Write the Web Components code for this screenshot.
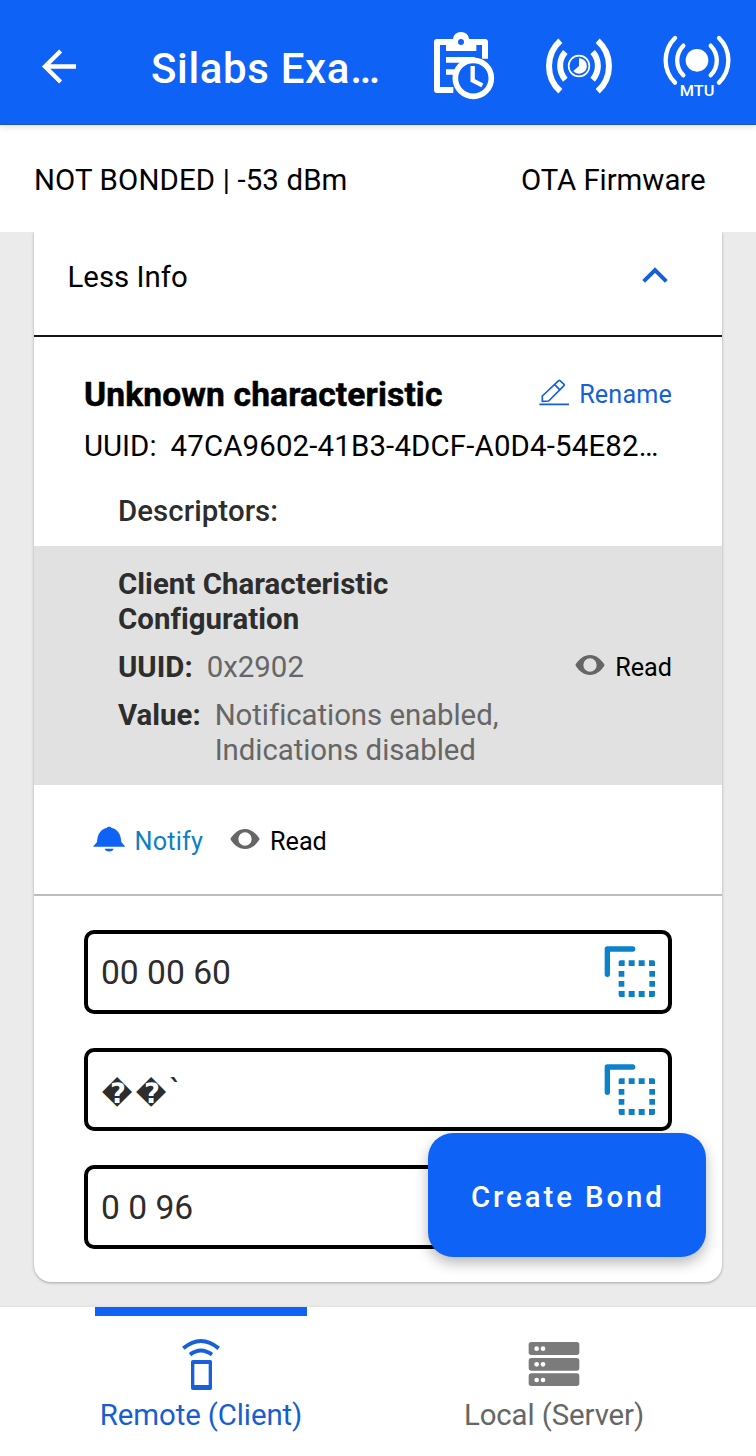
<!DOCTYPE html>
<html lang="en">
<head>
<meta charset="utf-8">
<title>Silabs Example</title>
<style>
body { margin: 0; background: #ebebeb; font-family: Roboto, "Liberation Sans", sans-serif; color: #000; }
</style>
</head>
<body>
<device-screen></device-screen>
<script>
const define = (name, html) => {
  const tpl = document.createElement('template');
  tpl.innerHTML = html;
  customElements.define(name, class extends HTMLElement {
    constructor() {
      super();
      this.attachShadow({ mode: 'open' }).append(tpl.content.cloneNode(true));
    }
  });
};

/* name: [width, height, viewBox, markup] */
const ICONS = {
  back: [40, 36, '120 144 120 108',
    '<path d="M228 199.500H134M182 153l-47 46.500 47 46.500" fill="none" stroke="currentColor" stroke-width="13"/>'],
  log: [62, 68, '99 96 186 204',
    `<path d="M255 176V126H111V270h49" fill="none" stroke="currentColor" stroke-width="18" stroke-linejoin="round"/>
     <path d="M138 134v19h91v-19h17v-17h-39a24 21 0 0 0-48 0h-39v17z" fill="currentColor"/>
     <circle cx="183" cy="126" r="9" fill="#0f62f6"/>
     <path d="M138 179.500h86M138 216h30" fill="none" stroke="currentColor" stroke-width="17"/>
     <circle cx="220" cy="235" r="54" fill="#0f62f6" stroke="currentColor" stroke-width="17"/>
     <path d="M218 198v43l29 15" fill="none" stroke="currentColor" stroke-width="13"/>`],
  interval: [68, 60, '435 108 204 180',
    `<g fill="none" stroke="currentColor" stroke-width="18"><path d="M481 122A102 102 0 0 0 481 274M593 122A102 102 0 0 1 593 274"/><path d="M496 156A63 63 0 0 0 496 239M578 156A63 63 0 0 1 578 239"/></g>
     <circle cx="537" cy="198" r="31" fill="none" stroke="currentColor" stroke-width="5"/>
     <path d="M537 175a23 23 0 1 1-17 38l17-15z" fill="currentColor"/>`],
  mtu: [69, 68, '789 96 207 204',
    `<g fill="none" stroke="currentColor" stroke-width="13" stroke-linecap="round"><path d="M825 114A94 94 0 0 0 825 248M957 114A94 94 0 0 1 957 248"/><path d="M850 137A63 63 0 0 0 850 226M932 137A63 63 0 0 1 932 226"/></g>
     <circle cx="891" cy="181" r="34" fill="currentColor"/>
     <text x="891" y="289" text-anchor="middle" font-size="46" font-weight="500" textLength="104" lengthAdjust="spacingAndGlyphs" fill="currentColor">MTU</text>`],
  up: [26, 16, '727 112 78 48',
    '<path d="M732 155l34-34 34 34" fill="none" stroke="#175fd8" stroke-width="12"/>'],
  edit: [30, 28, '417 444 90 84',
    '<path d="M418 523h89M427 514v-16l49-46q2-2 4 0l12 11q2 2 0 4l-46 46zM464 464l15 15" fill="none" stroke="#175fd8" stroke-width="5"/>'],
  eye: [30, 22, '630 864 90 66',
    '<path fill-rule="evenodd" d="M631 897C642 879 657 867 675 867S708 879 719 897C708 916 693 927 675 927S642 916 631 897zM675 877a20 20 0 1 0 0 40 20 20 0 1 0 0-40z" fill="#666"/>'],
  bell: [34, 26, '216 858 102 78',
    '<path d="M219 920l12-14c1-24 12-39 29-42 2-5 13-5 15 0 17 3 28 18 29 42l12 14zM254 926h27c-2 11-25 11-27 0z" fill="#0f62f6"/>'],
  copy: [52, 52, '613 138 156 156',
    `<path d="M623 223v-76h76" fill="none" stroke="#0d82cc" stroke-width="16" stroke-linecap="round" stroke-linejoin="round"/>
     <path fill="#0d7fc6" d="M657 198v-12q0-5 5-5h13v17zM748 181h13q5 0 5 5v12h-18zM657 273h18v18h-13q-5 0-5-5zM748 273h18v13q0 5-5 5h-13zM687 181h18v17h-18zM717 181h18v17h-18zM687 273h18v18h-18zM717 273h18v18h-18zM657 213h17v17h-17zM657 243h17v17h-17zM749 213h17v17h-17zM749 243h17v17h-17z"/>`],
  remote: [38, 52, '306 144 114 156',
    `<g fill="none" stroke="#175fdb"><path d="M310 175Q362 131 416 175" stroke-width="12"/><path d="M330 194Q362 169 396 194" stroke-width="12"/></g>
     <path fill-rule="evenodd" d="M339 210h52q5 0 5 5v80q0 5-5 5h-52q-6 0-6-5v-80q0-5 6-5zM343 222v63h43v-63z" fill="#175fdb"/>`],
  server: [52, 46, '265 153 156 138',
    `<g fill="#7b7b7b"><rect x="267" y="156" width="152" height="39" rx="8"/><rect x="267" y="204" width="152" height="38" rx="8"/><rect x="267" y="250" width="152" height="38" rx="8"/></g>
     <g fill="#fff"><circle cx="291" cy="176" r="7"/><circle cx="310" cy="176" r="7"/><circle cx="291" cy="223" r="7"/><circle cx="310" cy="223" r="7"/><circle cx="291" cy="270" r="7"/><circle cx="310" cy="270" r="7"/></g>`]
};
customElements.define('ui-icon', class extends HTMLElement {
  constructor() { super(); this.attachShadow({ mode: 'open' }); }
  connectedCallback() {
    const [w, h, box, body] = ICONS[this.getAttribute('name')];
    this.shadowRoot.innerHTML = `<style>:host{display:block;flex:none;width:${w}px;height:${h}px}svg{display:block}</style>
      <svg width="${w}" height="${h}" viewBox="${box}">${body}</svg>`;
  }
});

define('app-bar', `
<style>
:host { display: flex; box-sizing: border-box; height: 125px; background: #0f62f6; color: #fff; position: relative; z-index: 1;
  border-bottom: 1px solid #1c55b8; box-shadow: 0 1px 7px rgba(0,0,0,.16); align-items: flex-start; }
h1 { margin: 44px 0 0 71px; width: 282px; font: 500 42px/50px Roboto, sans-serif; letter-spacing: .65px; white-space: nowrap; }
</style>
<ui-icon name="back" style="margin:48px 0 0 40px"></ui-icon>
<h1>Silabs Exa…</h1>
<ui-icon name="log" style="margin-top:32px"></ui-icon>
<ui-icon name="interval" style="margin:36px 0 0 50px"></ui-icon>
<ui-icon name="mtu" style="margin:32px 0 0 50px"></ui-icon>`);

define('status-bar', `
<style>
:host { display: flex; justify-content: space-between; box-sizing: border-box; height: 107px; padding: 38px 50.500px 0 34px;
  background: #fff; font-size: 29.4px; line-height: 34px; }
::slotted(:first-child) { letter-spacing: .14px; }
::slotted(:last-child) { letter-spacing: -.05px; }
</style>
<slot></slot>`);

define('icon-label', `
<style>
:host { display: flex; font-size: 25.2px; line-height: 30px; white-space: nowrap; }
</style>
<slot name="icon"></slot><span><slot></slot></span>`);

define('card-header', `
<style>
:host { display: flex; justify-content: space-between; box-sizing: border-box; height: 105px; padding: 28px 54px 0 33.500px;
  border-bottom: 2px solid #151515; font-size: 29.4px; line-height: 34px; }
</style>
<span>Less Info</span><ui-icon name="up" style="margin-top:7px"></ui-icon>`);

define('characteristic-info', `
<style>
:host { display: block; box-sizing: border-box; height: 209px; padding: 38px 50px 0; }
.row { display: flex; justify-content: space-between; height: 54px; }
h2 { margin: 0; font: 700 33.6px/40px Roboto, sans-serif; letter-spacing: .13px; -webkit-text-stroke: .5px #000; }
icon-label { margin-top: 5px; color: #175fd8; letter-spacing: .15px; }
p { margin: 0; font-size: 29.4px; line-height: 34px; height: 65px; white-space: nowrap; }
p span { margin-left: 14px; letter-spacing: .17px; }
.d { margin-left: 34px; font-weight: 500; color: #2d2d2d; letter-spacing: .08px; }
</style>
<div class="row"><h2>Unknown characteristic</h2>
<icon-label><ui-icon slot="icon" name="edit" style="margin:-2px 10px 0 0"></ui-icon>Rename</icon-label></div>
<p>UUID:<span>47CA9602-41B3-4DCF-A0D4-54E82…</span></p>
<p class="d">Descriptors:</p>`);

define('descriptor-row', `
<style>
:host { display: flex; justify-content: space-between; box-sizing: border-box; height: 239px; padding: 21px 50px 0 84px;
  background: #e1e1e1; font-size: 29.4px; line-height: 34.500px; color: #666; }
b { color: #2d2d2d; font-weight: 700; }
.name { display: block; margin-bottom: 14px; letter-spacing: .04px; }
.field { display: flex; gap: 14px; height: 48px; white-space: nowrap; }
.v { letter-spacing: -.05px; }
icon-label { margin-top: 86px; color: #000; }
</style>
<div>
<b class="name">Client Characteristic<br>Configuration</b>
<div class="field"><b>UUID:</b><span>0x2902</span></div>
<div class="field"><b>Value:</b><span class="v">Notifications enabled,<br>Indications disabled</span></div>
</div>
<icon-label><ui-icon slot="icon" name="eye" style="margin:.5px 10px 0 0"></ui-icon>Read</icon-label>`);

define('action-row', `
<style>
:host { display: flex; box-sizing: border-box; height: 111px; padding: 42px 0 0 58px; border-bottom: 2px solid #bdbdbd; }
.n { color: #0d7fc6; width: 138px; letter-spacing: .2px; }
</style>
<icon-label class="n"><ui-icon slot="icon" name="bell" style="margin:-1px 8.500px 0 0"></ui-icon>Notify</icon-label>
<icon-label><ui-icon slot="icon" name="eye" style="margin:1px 10px 0 0"></ui-icon>Read</icon-label>`);

define('value-box', `
<style>
:host { display: flex; justify-content: space-between; box-sizing: border-box; height: 83.500px; border: 4px solid #000; border-radius: 10px;
  padding: 19px 12px 0 13px; font-size: 33.6px; line-height: 40px; color: #2d2d2d; white-space: nowrap; }
::slotted(.sym) { font: 700 28px/20px "DejaVu Sans", sans-serif; letter-spacing: 2.8px; vertical-align: -1.5px; margin-left: .5px; }
ui-icon { margin-top: -7px; }
</style>
<span><slot></slot></span><ui-icon name="copy"></ui-icon>`);

define('service-card', `
<style>
:host { display: block; box-sizing: border-box; height: 1050px; margin: 0 34px 0 34px; background: #fff; border-radius: 0 0 17px 17px;
  box-shadow: 0 1px 3px rgba(0,0,0,.3); clip-path: inset(0 -6px -6px -6px); }
.values { display: grid; gap: 34px; padding: 34px 50px 0; }
</style>
<card-header></card-header>
<characteristic-info></characteristic-info>
<descriptor-row></descriptor-row>
<action-row></action-row>
<div class="values">
<value-box>00 00 60</value-box>
<value-box><span class="sym">��</span>\`</value-box>
<value-box>0 0 96</value-box>
</div>`);

define('bond-button', `
<style>
:host { display: block; position: absolute; left: 428px; top: 1133px; width: 277.500px; height: 124px; box-sizing: border-box;
  padding: 47px 0 0 43px; border-radius: 25px; background: #0f62f6; color: #fff; box-shadow: 0 6px 14px rgba(0,0,0,.28);
  font-size: 29.4px; line-height: 34px; font-weight: 500; letter-spacing: 2.9px; white-space: nowrap; }
</style>
<slot></slot>`);

define('nav-tab', `
<style>
:host { display: flex; flex-direction: column; align-items: center; box-sizing: border-box; height: 149px; color: #666;
  font-size: 29.4px; line-height: 34px; letter-spacing: -.1px; white-space: nowrap; }
i { width: 212px; height: 8.500px; background: transparent; }
:host([active]) { color: #175fcf; }
:host([active]) i { background: #0f62f6; }
.pic { display: flex; align-items: center; height: 52px; margin: 22.500px 0 8px; }
</style>
<i></i><div class="pic"><slot name="icon"></slot></div><span><slot></slot></span>`);

define('bottom-nav', `
<style>
:host { display: grid; grid-template-columns: 212px 212px; column-gap: 141px; padding-left: 95px; background: #fff; height: 149px; box-shadow: 0 -1px 3px rgba(0,0,0,.05); }
</style>
<nav-tab active><ui-icon slot="icon" name="remote"></ui-icon>Remote (Client)</nav-tab>
<nav-tab><ui-icon slot="icon" name="server"></ui-icon>Local (Server)</nav-tab>`);

define('device-screen', `
<style>
:host { display: block; position: relative; width: 756px; height: 1456px; overflow: hidden; background: #ebebeb; }
main { height: 1075px; }
</style>
<app-bar></app-bar>
<status-bar><span>NOT BONDED | -53 dBm</span><span>OTA Firmware</span></status-bar>
<main><service-card></service-card></main>
<bottom-nav></bottom-nav>
<bond-button>Create Bond</bond-button>`);
</script>
</body>
</html>
